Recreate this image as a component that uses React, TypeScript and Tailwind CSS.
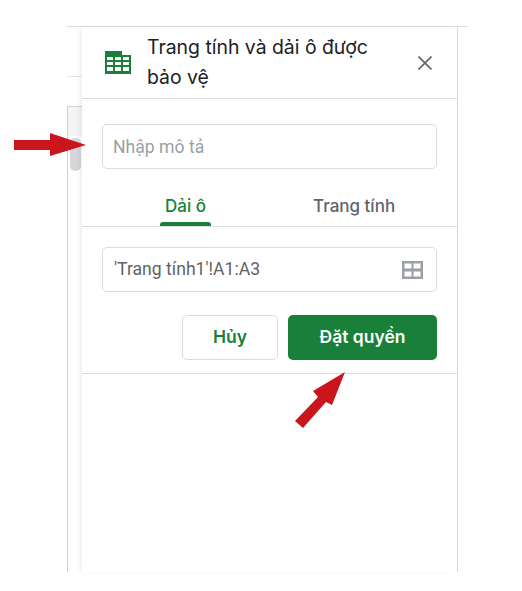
const sans = 'font-["Roboto",sans-serif]';
const display = 'font-["Inter",sans-serif]';

function SheetIcon() {
  return (
    <svg width="26" height="23" viewBox="0 0 26 23" className="shrink-0" aria-hidden="true">
      <path
        fill="#188038"
        d="M0 0h17v4h9v19H0z M2 6v3h6V6z M10 6v3h6V6z M18 6v3h6V6z M2 11v3h6v-3z M10 11v3h6v-3z M18 11v3h6v-3z M2 16v4h6v-4z M10 16v4h6v-4z M18 16v4h6v-4z"
        fillRule="evenodd"
      />
    </svg>
  );
}

function GridIcon() {
  return (
    <svg width="21" height="18" viewBox="0 0 21 18" aria-hidden="true">
      <path
        fill="#9aa0a6"
        d="M0 0h21v18H0z M2.500 2.500v5h7v-5z M11.500 2.500v5h7v-5z M2.500 10.500v5h7v-5z M11.500 10.500v5h7v-5z"
        fillRule="evenodd"
      />
    </svg>
  );
}

function CloseIcon() {
  return (
    <svg width="14" height="14" viewBox="0 0 14 14" aria-hidden="true">
      <path d="M0.500 0.500l13 13M13.500 0.500l-13 13" stroke="#5f6368" strokeWidth="1.600" fill="none" />
    </svg>
  );
}

export default function App() {
  return (
    <div className={`relative h-[591px] w-[522px] overflow-hidden bg-white ${sans}`}>
      <div className="ml-[67px] flex h-[572px] w-[401px] pt-[26px]">
        <div className="flex h-full w-full border-t border-[#dadce0]">
          {/* sheet behind the panel */}
          <div className="flex w-[15px] shrink-0 flex-col">
            <div className="h-[50px] shrink-0 border-b border-[#e2e3e5]" />
            <div className="mt-[29px] flex grow flex-col border-t border-l border-[#d0d0d0]">
              <div className="h-[29px] shrink-0 bg-[#f5f5f5]" />
              <div className="mt-[2px] ml-[2px] h-[33px] w-[11px] rounded-[5px] bg-[#d5d7db]" />
            </div>
          </div>

          <div className="flex w-[376px] shrink-0 flex-col border-r border-[#d8d8d8] shadow-[-4px_0_6px_-2px_rgba(0,0,0,0.08)]">
            <div className="flex h-[72px] shrink-0 items-center border-b border-[#dadce0] pl-[23px] pr-[25px]">
              <SheetIcon />
              <div className={`mt-[-2px] ml-[16px] w-[250px] text-[19.4px] leading-[30px] text-[#202124] ${display}`}>
                Trang tính và dải ô được bảo vệ
              </div>
              <div className="mt-[1px] ml-auto flex">
                <CloseIcon />
              </div>
            </div>

            <div className="mx-[20px] mt-[25px] flex h-[45px] shrink-0 items-center rounded-[5px] border border-[#dadce0] px-[10px] pt-[2px] text-[17.6px] text-[#9aa0a6]">
              Nhập mô tả
            </div>

            <div className={`mt-[19px] flex h-[39px] shrink-0 border-b border-[#dadce0] text-[17px] font-medium ${display}`}>
              <div className="relative ml-[78px] flex w-[51px] justify-center pt-[6px] text-[#188038]">
                Dải ô
                <div className="absolute bottom-0 left-0 h-[4px] w-full rounded-t-[3px] bg-[#188038]" />
              </div>
              <div className="ml-[102px] pt-[6px] text-[#5f6368]">Trang tính</div>
            </div>

            <div className="mx-[20px] mt-[20px] flex h-[45px] shrink-0 items-center justify-between rounded-[5px] border border-[#dadce0] pl-[11px] pr-[13px] text-[17.6px] text-[#5f6368]">
              <span>'Trang tính1'!A1:A3</span>
              <GridIcon />
            </div>

            <div className={`mt-[23px] mr-[20px] flex shrink-0 justify-end gap-[10px] text-[17.5px] font-semibold ${display}`}>
              <div className="flex h-[45px] w-[96px] items-center justify-center rounded-[5px] border border-[#dadce0] text-[#188038]">
                Hủy
              </div>
              <div className="flex h-[45px] w-[149px] items-center justify-center rounded-[5px] bg-[#188038] text-white">
                Đặt quyền
              </div>
            </div>

            <div className="mt-[13px] border-b border-[#dadce0]" />
          </div>
        </div>
      </div>

      {/* red annotation arrows */}
      <svg width="522" height="591" viewBox="0 0 522 591" className="pointer-events-none absolute top-0 left-0" aria-hidden="true">
        <polygon fill="#c9151b" points="14,140 50,140 50,133 86,145 50,156 50,150 14,150" />
        <polygon fill="#c9151b" points="345,372 313,391 318,397 295,421 303,428 326,402 332,405" />
      </svg>
    </div>
  );
}
